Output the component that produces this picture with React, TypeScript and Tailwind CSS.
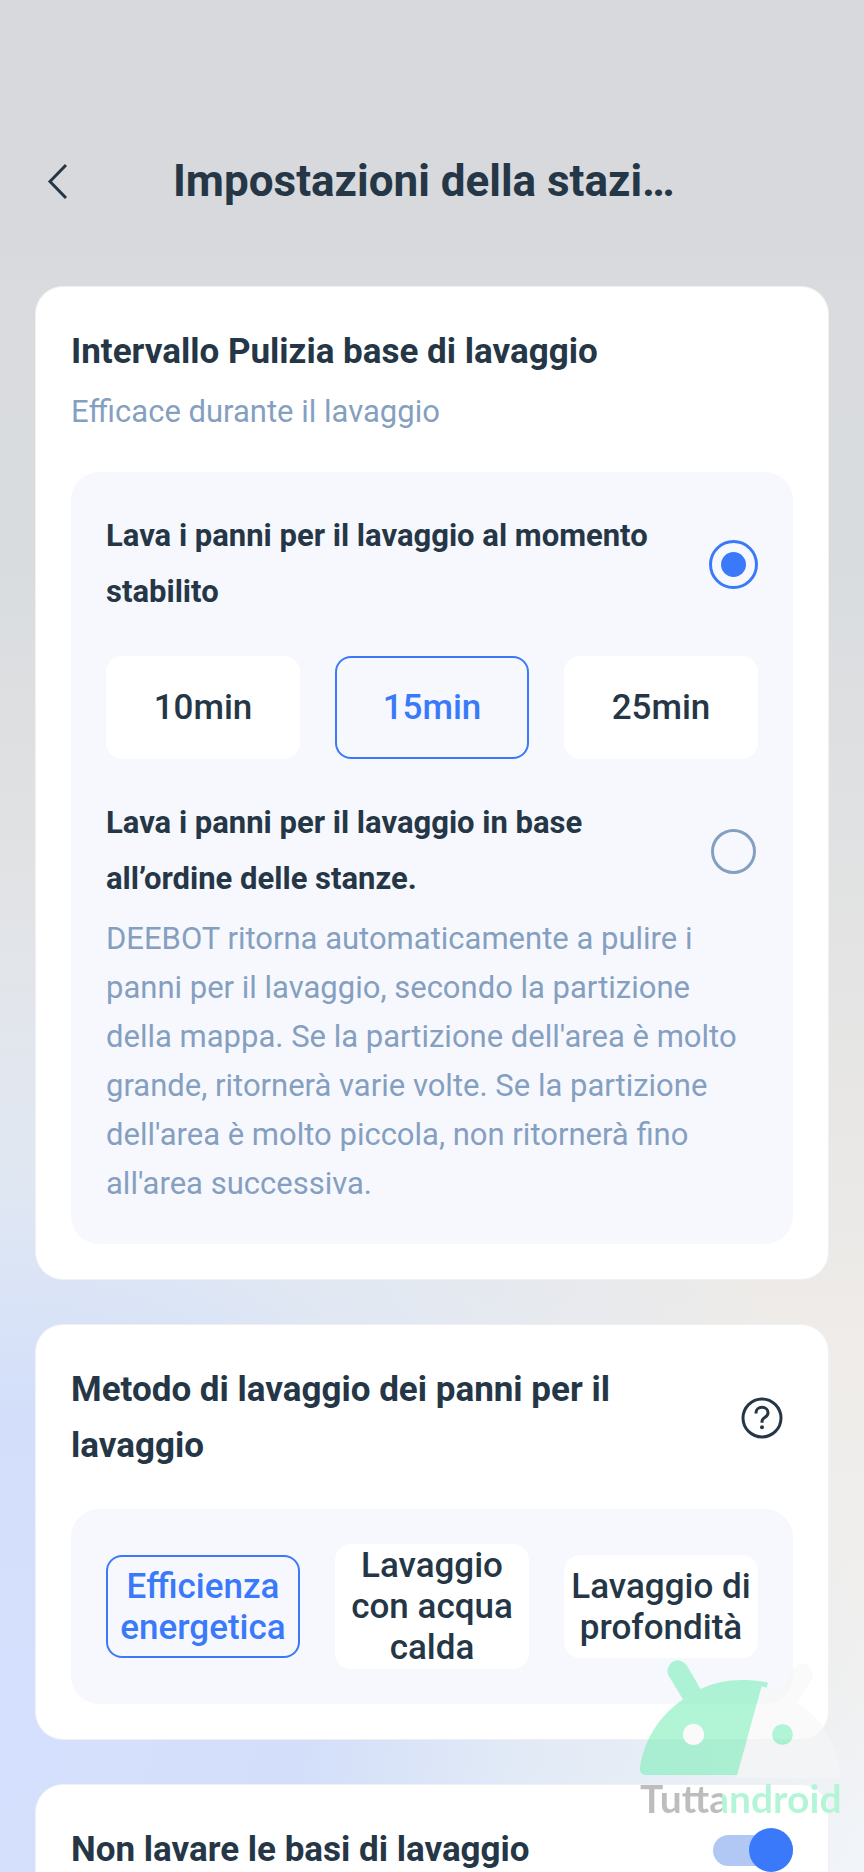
import {useState, ReactElement, ReactNode} from 'react';
import clsx from 'clsx';

const intervals = ['10min', '15min', '25min'];
const methods = ['Efficienza energetica', 'Lavaggio con acqua calda', 'Lavaggio di profondità'];

interface CardProps {
  children: ReactNode;
}

const Card = ({children}: CardProps): ReactElement => (
  <section className="rounded-[28px] border border-[#f1f1f2] bg-white px-[35px] pt-[37px] pb-[35px]">
    {children}
  </section>
);

interface OptionGroupProps {
  label: string;
  options: string[];
  value: string;
  onSelect: (v: string) => void;
}

const OptionGroup = ({label, options, value, onSelect}: OptionGroupProps): ReactElement => (
  <div role="group" aria-label={label} className="grid grid-cols-3 items-center gap-[35px]">
    {options.map((o) => (
      <button
        key={o}
        type="button"
        aria-pressed={o === value}
        onClick={() => onSelect(o)}
        className={clsx(
          'min-h-[103px] rounded-2xl py-px text-[35px] leading-[41px] font-medium',
          o === value ? 'text-[#3a7afa] ring-2 ring-[#3a7afa] ring-inset' : 'bg-white'
        )}
      >
        {o}
      </button>
    ))}
  </div>
);

interface RadioRowProps {
  id: string;
  label: string;
  checked: boolean;
  onChange: () => void;
}

const RadioRow = ({id, label, checked, onChange}: RadioRowProps): ReactElement => (
  <div className="flex items-center justify-between gap-9">
    <label htmlFor={id} className="text-[31px] leading-[56px] font-bold">
      {label}
    </label>
    <input
      id={id}
      type="radio"
      name="wash-mode"
      checked={checked}
      onChange={onChange}
      className="m-0.5 grid size-[45px] shrink-0 appearance-none place-items-center rounded-full border-3 border-[#859fc1] checked:m-0 checked:size-[49px] checked:border-[#3a7afa] checked:before:size-[25px] checked:before:rounded-full checked:before:bg-[#3a7afa]"
    />
  </div>
);

const HelpIcon = (): ReactElement => (
  <svg viewBox="0 0 42 42" className="size-[42px]" fill="none" stroke="currentColor" strokeWidth="3">
    <circle cx="21" cy="21" r="19" />
    <path d="M15 16.5v-.8c0-3.2 2.6-5.4 6-5.4s6 2.2 6 5.4c0 2.6-1.6 3.7-3.3 4.9-1.8 1.2-2.7 2-2.7 4v1.2" />
    <circle cx="21" cy="30.3" r="2" fill="currentColor" stroke="none" />
  </svg>
);

const Watermark = (): ReactElement => (
  <div className="pointer-events-none absolute right-6 bottom-14 w-[200px]">
    <svg viewBox="0 0 200 120" className="block h-[120px] w-[200px]">
      <g fill="#7feebb" opacity="0.6">
        <path d="M43 39.5 28.8 16A10.5 10.5 0 0 1 46.8 5.2L60.5 29C73 23 87 20 102 20c9 0 17.5.8 26 2.8l-1.3 5-5-1.3L97 115H6c-4 0-6.500-3-6-7C4 79 20 55 43 39.500ZM53.500 64a10.500 10.500 0 1 0 0 21 10.500 10.500 0 0 0 0-21Z" />
        <circle cx="142.500" cy="74.500" r="10.500" />
      </g>
      <path
        fill="#f6f6f6"
        opacity="0.6"
        fillRule="evenodd"
        d="M121.700 26.500l5 1.300c4.700 1.200 9 2.600 13.300 4.700L153.500 8.500a10.500 10.500 0 0 1 18 10.800L157.500 42.500C181 58 196 82 200 112c0 4-2 6-6 6H97ZM142.500 64a10.500 10.500 0 1 0 0 21 10.500 10.500 0 0 0 0-21Z"
      />
      <circle cx="53.500" cy="74.500" r="10.500" fill="#fafafa" />
    </svg>
    <div className="bg-linear-to-r from-[#bdbdbd] from-41% to-[#b3f5d6] to-41% bg-clip-text font-[Lato] text-[39px] leading-9 font-bold text-transparent">
      Tuttandroid
    </div>
  </div>
);

export default function App(): ReactElement {
  const [mode, setMode] = useState('time');
  const [interval, setInterval] = useState('15min');
  const [method, setMethod] = useState(methods[0]);
  const [skipWash, setSkipWash] = useState(true);

  return (
    <div className="relative flex h-screen flex-col overflow-hidden bg-[radial-gradient(ellipse_100%_48%_at_0%_92%,#d4e0fd_0%,#d3dffa_35%,#dce7f7bb_60%,transparent_100%),linear-gradient(to_bottom,#d8d9dc_0%,#d9dcdf_30%,#e4e4e4_52%,#efece9_72%,#f0f0f0_90%,#f1f5fa_100%)] font-[Roboto,sans-serif] text-[#253746]">
      <header className="flex shrink-0 items-center bg-[#d8d9dc] px-[35px] pt-[153px] pb-[46px]">
        <button type="button" aria-label="Indietro" className="w-[138px] shrink-0 pl-3">
          <svg viewBox="0 0 22 36" className="h-9 w-[22px]" fill="none" stroke="currentColor" strokeWidth="3">
            <path d="M19 2 3 18.500 19 35" />
          </svg>
        </button>
        <h1 className="min-w-0 flex-1 truncate text-[44px] leading-[56px] font-bold">
          Impostazioni della stazione
        </h1>
        <div className="w-[138px] shrink-0" />
      </header>

      <main className="flex min-h-0 flex-1 flex-col gap-11 overflow-y-auto px-[35px] pt-[31px] [scrollbar-width:none]">
        <Card>
          <h2 className="text-[35px] leading-[56px] font-bold">Intervallo Pulizia base di lavaggio</h2>
          <p className="mt-[7px] text-[31px] leading-[49px] text-[#859fc1]">Efficace durante il lavaggio</p>

          <div className="mt-9 flex flex-col gap-9 rounded-[28px] bg-[#f6f8fd] px-[35px] py-9">
            <RadioRow
              id="mode-time"
              label="Lava i panni per il lavaggio al momento stabilito"
              checked={mode === 'time'}
              onChange={() => setMode('time')}
            />
            <OptionGroup label="Intervallo" options={intervals} value={interval} onSelect={setInterval} />
            <div>
              <RadioRow
                id="mode-room"
                label="Lava i panni per il lavaggio in base all’ordine delle stanze."
                checked={mode === 'room'}
                onChange={() => setMode('room')}
              />
              <p className="mt-[7px] text-[31px] leading-[49px] text-[#859fc1]">
                DEEBOT ritorna automaticamente a pulire i panni per il lavaggio, secondo la partizione
                della mappa. Se la partizione dell'area è molto grande, ritornerà varie volte. Se la
                partizione dell'area è molto piccola, non ritornerà fino all'area successiva.
              </p>
            </div>
          </div>
        </Card>

        <Card>
          <div className="flex items-center justify-between gap-9">
            <h2 className="text-[35px] leading-[56px] font-bold">Metodo di lavaggio dei panni per il lavaggio</h2>
            <button type="button" aria-label="Aiuto" className="shrink-0 px-2.5">
              <HelpIcon />
            </button>
          </div>
          <div className="mt-[35px] rounded-[28px] bg-[#f6f8fd] px-[35px] py-[35px]">
            <OptionGroup label="Metodo di lavaggio" options={methods} value={method} onSelect={setMethod} />
          </div>
        </Card>

        <Card>
          <div className="flex items-center justify-between gap-9">
            <label htmlFor="skip-wash" className="text-[35px] leading-[56px] font-bold">
              Non lavare le basi di lavaggio
            </label>
            <input
              id="skip-wash"
              type="checkbox"
              role="switch"
              checked={skipWash}
              onChange={() => setSkipWash(!skipWash)}
              className="flex h-[31px] w-20 shrink-0 appearance-none items-center rounded-full bg-[#d5dbe5] before:size-11 before:shrink-0 before:rounded-full before:bg-white checked:justify-end checked:bg-[#b1c8f5] checked:before:bg-[#3a7afa]"
            />
          </div>
        </Card>
      </main>

      <Watermark />
    </div>
  );
}
